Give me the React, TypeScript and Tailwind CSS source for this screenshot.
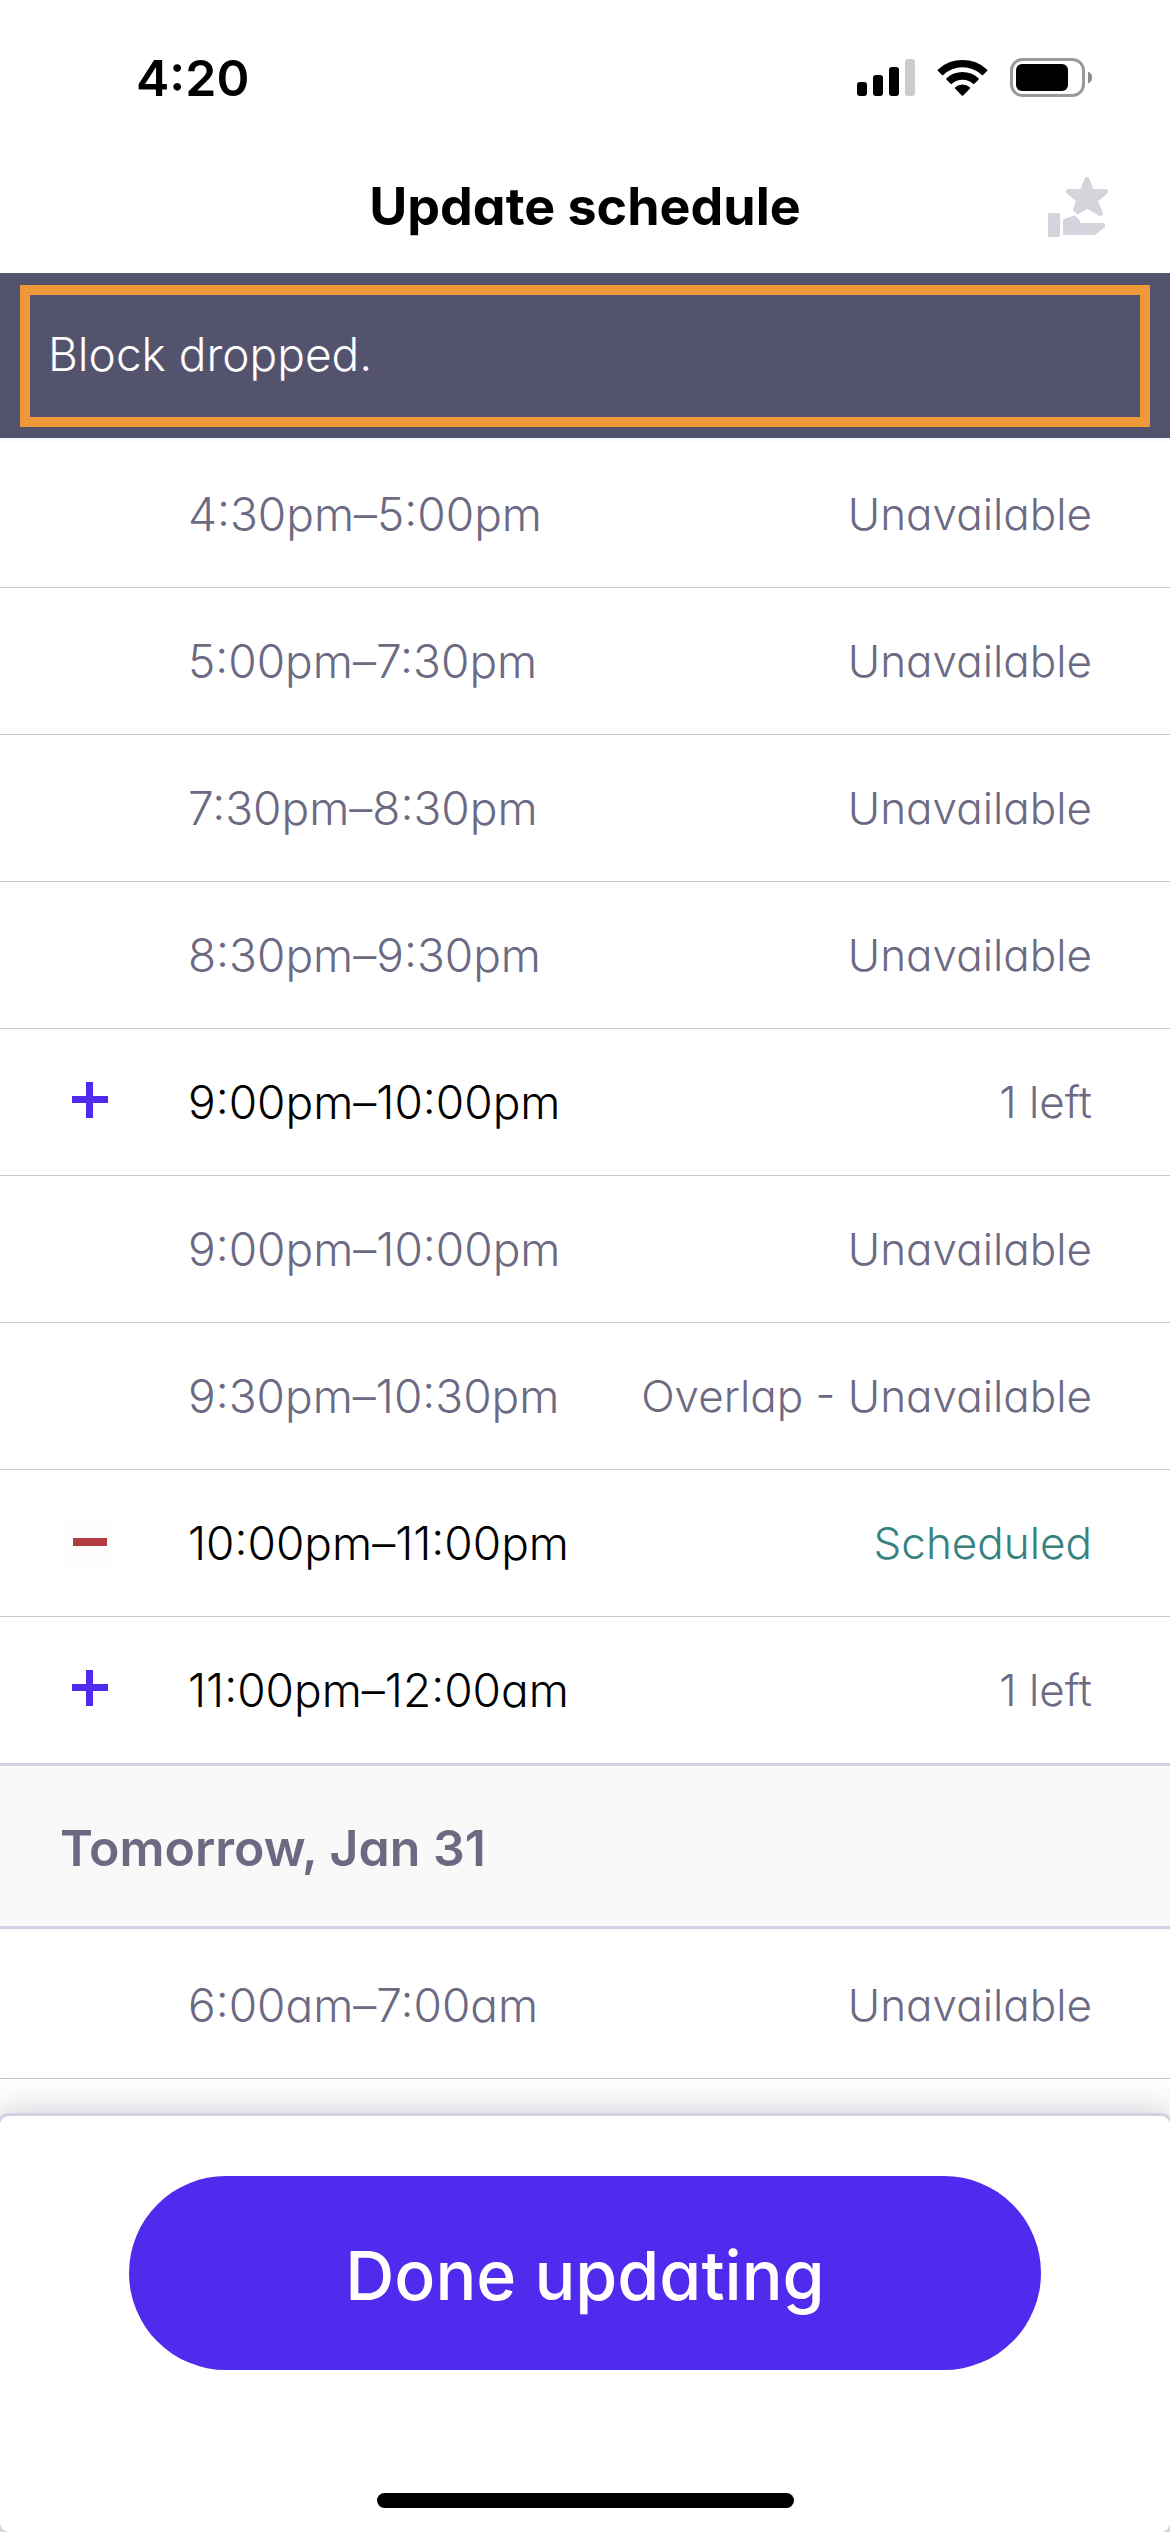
import { useState } from 'react';

type Block = {
    id: number;
    time: string;
    status: string;
    action?: 'add' | 'drop';
};

const todayBlocks: Block[] = [
    { id: 1, time: '4:30pm–5:00pm', status: 'Unavailable' },
    { id: 2, time: '5:00pm–7:30pm', status: 'Unavailable' },
    { id: 3, time: '7:30pm–8:30pm', status: 'Unavailable' },
    { id: 4, time: '8:30pm–9:30pm', status: 'Unavailable' },
    { id: 5, time: '9:00pm–10:00pm', status: '1 left', action: 'add' },
    { id: 6, time: '9:00pm–10:00pm', status: 'Unavailable' },
    { id: 7, time: '9:30pm–10:30pm', status: 'Overlap - Unavailable' },
    { id: 8, time: '10:00pm–11:00pm', status: 'Scheduled', action: 'drop' },
    { id: 9, time: '11:00pm–12:00am', status: '1 left', action: 'add' }
];

const tomorrowBlocks: Block[] = [
    { id: 10, time: '6:00am–7:00am', status: 'Unavailable' }
];

function StatusBar() {
    return (
        <div className="flex items-center justify-between pt-12 pb-8 pl-[136px] pr-[78px]">
            <span className="text-[50px] leading-[60px] font-semibold">4:20</span>
            <div className="flex items-center gap-[22px]">
                <svg width="58" height="38" viewBox="0 0 58 38" aria-hidden="true">
                    <rect x="0" y="23" width="10" height="14" rx="3" />
                    <rect x="16" y="16" width="10" height="21" rx="3" />
                    <rect x="32" y="8" width="10" height="29" rx="3" />
                    <rect x="48" y="0" width="10" height="37" rx="3" fill="#cbcbcb" />
                </svg>
                <svg width="51" height="38" viewBox="0 0 51 38" aria-hidden="true">
                    <path d="M1 10.5A36 36 0 0 1 50 10.5Q50.8 11.3 50 12.1L46 16Q45.4 16.5 44.7 15.9A28 28 0 0 0 6.3 15.9Q5.6 16.5 5 16L1 12.1Q.2 11.3 1 10.5Z" />
                    <path d="M9.5 19.2A23.5 23.5 0 0 1 41.5 19.2Q42.2 20 41.5 20.7L37.3 24.8Q36.7 25.3 36 24.8A15.5 15.5 0 0 0 15 24.8Q14.3 25.3 13.7 24.8L9.5 20.7Q8.8 20 9.5 19.2Z" />
                    <path d="M18.2 28.2A11 11 0 0 1 32.8 28.2Q33.5 29 32.8 29.7L26.2 36.4Q25.5 37.1 24.8 36.4L18.2 29.7Q17.5 29 18.2 28.2Z" />
                </svg>
                <svg width="82" height="40" viewBox="0 0 82 40" aria-hidden="true">
                    <rect x="1.5" y="1.5" width="72" height="36" rx="11" fill="none" stroke="#999" strokeWidth="3" />
                    <rect x="6" y="6" width="52" height="27" rx="6" />
                    <path d="M78 13.5Q82 15 82 19.5Q82 24 78 25.5Z" fill="#8c8c8c" />
                </svg>
            </div>
        </div>
    );
}

function RewardsIcon() {
    return (
        <svg width="60" height="60" viewBox="0 0 60 60" fill="#d5d3dc" stroke="#d5d3dc" strokeLinejoin="round" aria-hidden="true">
            <path d="M39 2.5L43.8 14.5H57.5L47 23.5L52.5 36.5L39 28.8L30 34.5L27.5 32.5L31 23.5L20.5 14.5H34.2Z" strokeWidth="5" />
            <rect x="1.5" y="37.5" width="9" height="21" strokeWidth="3" />
            <path d="M16.5 43.5L26.5 40L30.5 44V47.5H55.5V49L46.5 56.5H16.5Z" strokeWidth="3" />
        </svg>
    );
}

function BlockRow({ block }: { block: Block }) {
    return (
        <li className="flex items-center h-[147px] border-b border-[#c6c5c9] pl-[66px] pr-[78px]">
            <div className="w-[122px] shrink-0">
                {block.action === 'add' && (
                    <button type="button" aria-label={`Add ${block.time}`} className="block size-12 mb-1">
                        <svg viewBox="0 0 48 48" fill="#502bed" aria-hidden="true">
                            <rect x="6" y="20" width="36" height="7" />
                            <rect x="20" y="6" width="7" height="36" />
                        </svg>
                    </button>
                )}
                {block.action === 'drop' && (
                    <button type="button" aria-label={`Drop ${block.time}`} className="block size-12 mb-1 bg-[#fefcfd]">
                        <svg viewBox="0 0 48 48" fill="#b03c41" aria-hidden="true">
                            <rect x="7" y="21" width="34" height="8" />
                        </svg>
                    </button>
                )}
            </div>
            <span className={block.action ? 'text-[46px] font-light text-black' : 'text-[46px] font-light text-[#6c6a83]'}>
                {block.time}
            </span>
            <span className={block.status === 'Scheduled' ? 'ml-auto text-[44px] font-light text-[#37827f]' : 'ml-auto text-[44px] font-light text-[#6c6a83]'}>
                {block.status}
            </span>
        </li>
    );
}

export default function App() {
    const [message] = useState<string>('Block dropped.');

    return (
        <div className="min-h-screen flex flex-col bg-white text-black font-['Inter',sans-serif] [font-feature-settings:'cv11']">
            <StatusBar />

            <header className="grid grid-cols-[1fr_auto_1fr] items-center h-[133px] px-[62px]">
                <h1 className="col-start-2 text-[52px] leading-[60px] font-bold">Update schedule</h1>
                <button type="button" aria-label="Rewards" className="justify-self-end">
                    <RewardsIcon />
                </button>
            </header>

            <div role="status" className="bg-[#54536e] px-[20px] pt-3 pb-[11px]">
                <div className="flex items-center h-[142px] border-10 border-[#ee9837] pl-[18px] pb-1 text-[46px] font-light text-white">
                    {message}
                </div>
            </div>

            {/* Blocks */}
            <main className="border-t-3 border-[#f9f9f9]">
                <ul className="-mb-px">
                    {todayBlocks.map(block => (
                        <BlockRow key={block.id} block={block} />
                    ))}
                </ul>
                <h2 className="relative flex items-center h-[166px] bg-[#f9f9f9] border-y-3 border-[#d3d0e4] pl-[60px] pt-1 text-[50px] font-semibold text-[#6c6a83]">
                    Tomorrow, Jan 31
                </h2>
                <ul className="border-t-3 border-[#f9f9f9]">
                    {tomorrowBlocks.map(block => (
                        <BlockRow key={block.id} block={block} />
                    ))}
                </ul>
            </main>

            {/* Bottom sheet */}
            <footer className="sticky bottom-0 mt-auto flex flex-col bg-white rounded-[9px] pt-15 pb-6 shadow-[0_0_0_3px_#d3d0e4,0_0_36px_4px_rgba(84,83,110,0.3)]">
                <button type="button" className="mx-[129px] h-[194px] rounded-full bg-[#502bed] pt-1 text-[68px] font-medium text-white">
                    Done updating
                </button>
                <div className="mx-auto mt-[123px] h-[15px] w-[417px] rounded-full bg-black" />
            </footer>
        </div>
    );
}
